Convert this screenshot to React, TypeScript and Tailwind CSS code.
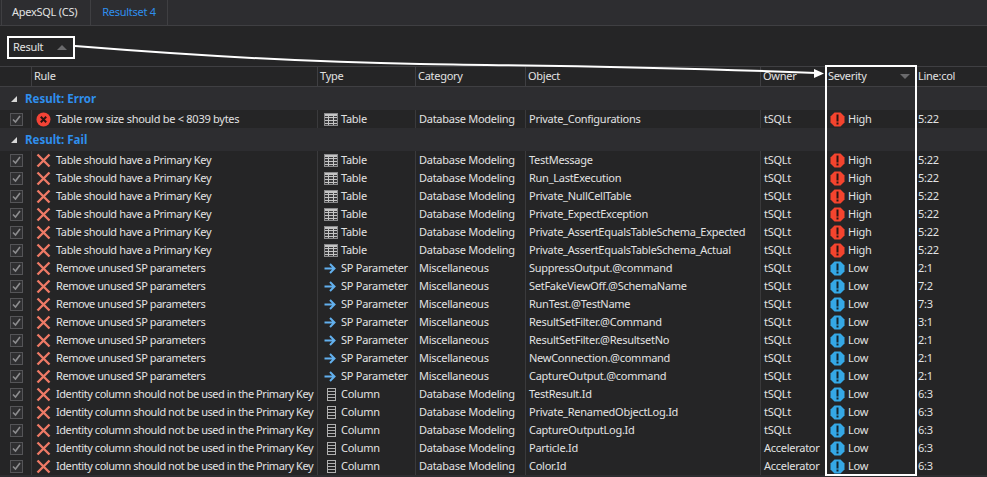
import React from 'react';

type Sev = 'High' | 'Low';
type Kind = 'Table' | 'SP Parameter' | 'Column';

interface Row {
  rule: string;
  kind: Kind;
  category: string;
  object: string;
  owner: string;
  sev: Sev;
  line: string;
}

const PK = 'Table should have a Primary Key';
const SP = 'Remove unused SP parameters';
const ID = 'Identity column should not be used in the Primary Key';
const DM = 'Database Modeling';
const MI = 'Miscellaneous';

// each rule text runs a bit differently wide against the original font
const ruleTracking: Record<string, string> = {
  [PK]: 'tracking-[-0.37px]',
  [SP]: 'tracking-[-0.45px]',
  [ID]: 'tracking-[-0.44px]',
};

const failRows: Row[] = [
  { rule: PK, kind: 'Table', category: DM, object: 'TestMessage', owner: 'tSQLt', sev: 'High', line: '5:22' },
  { rule: PK, kind: 'Table', category: DM, object: 'Run_LastExecution', owner: 'tSQLt', sev: 'High', line: '5:22' },
  { rule: PK, kind: 'Table', category: DM, object: 'Private_NullCellTable', owner: 'tSQLt', sev: 'High', line: '5:22' },
  { rule: PK, kind: 'Table', category: DM, object: 'Private_ExpectException', owner: 'tSQLt', sev: 'High', line: '5:22' },
  { rule: PK, kind: 'Table', category: DM, object: 'Private_AssertEqualsTableSchema_Expected', owner: 'tSQLt', sev: 'High', line: '5:22' },
  { rule: PK, kind: 'Table', category: DM, object: 'Private_AssertEqualsTableSchema_Actual', owner: 'tSQLt', sev: 'High', line: '5:22' },
  { rule: SP, kind: 'SP Parameter', category: MI, object: 'SuppressOutput.@command', owner: 'tSQLt', sev: 'Low', line: '2:1' },
  { rule: SP, kind: 'SP Parameter', category: MI, object: 'SetFakeViewOff.@SchemaName', owner: 'tSQLt', sev: 'Low', line: '7:2' },
  { rule: SP, kind: 'SP Parameter', category: MI, object: 'RunTest.@TestName', owner: 'tSQLt', sev: 'Low', line: '7:3' },
  { rule: SP, kind: 'SP Parameter', category: MI, object: 'ResultSetFilter.@Command', owner: 'tSQLt', sev: 'Low', line: '3:1' },
  { rule: SP, kind: 'SP Parameter', category: MI, object: 'ResultSetFilter.@ResultsetNo', owner: 'tSQLt', sev: 'Low', line: '2:1' },
  { rule: SP, kind: 'SP Parameter', category: MI, object: 'NewConnection.@command', owner: 'tSQLt', sev: 'Low', line: '2:1' },
  { rule: SP, kind: 'SP Parameter', category: MI, object: 'CaptureOutput.@command', owner: 'tSQLt', sev: 'Low', line: '2:1' },
  { rule: ID, kind: 'Column', category: DM, object: 'TestResult.Id', owner: 'tSQLt', sev: 'Low', line: '6:3' },
  { rule: ID, kind: 'Column', category: DM, object: 'Private_RenamedObjectLog.Id', owner: 'tSQLt', sev: 'Low', line: '6:3' },
  { rule: ID, kind: 'Column', category: DM, object: 'CaptureOutputLog.Id', owner: 'tSQLt', sev: 'Low', line: '6:3' },
  { rule: ID, kind: 'Column', category: DM, object: 'Particle.Id', owner: 'Accelerator', sev: 'Low', line: '6:3' },
  { rule: ID, kind: 'Column', category: DM, object: 'Color.Id', owner: 'Accelerator', sev: 'Low', line: '6:3' },
];

const errorRow: Row = {
  rule: 'Table row size should be < 8039 bytes',
  kind: 'Table',
  category: DM,
  object: 'Private_Configurations',
  owner: 'tSQLt',
  sev: 'High',
  line: '5:22',
};

const gridCols = 'grid grid-cols-[31px_286px_98px_110px_235px_65px_90px_1fr]';

const CheckBox = () => (
  <div className="w-[13px] h-[13px] border border-[#555558] bg-[#2f2f31] flex items-center justify-center">
    <svg width="11" height="11" viewBox="0 0 11 11">
      <path d="M2 5.5 L4.5 8 L9 2" fill="none" stroke="#8d8d8f" strokeWidth="1.6" />
    </svg>
  </div>
);

const RedX = () => (
  <svg width="15" height="15" viewBox="0 0 15 15" className="shrink-0">
    <path d="M1.5 1.5 L13.5 13.5 M13.5 1.5 L1.5 13.5" stroke="#ee7a66" strokeWidth="2.4" fill="none" />
  </svg>
);

const ErrorCircle = () => (
  <svg width="15" height="15" viewBox="0 0 15 15" className="shrink-0">
    <circle cx="7.5" cy="7.5" r="7" fill="#f44336" />
    <path d="M4.8 4.8 L10.2 10.2 M10.2 4.8 L4.8 10.2" stroke="#2a1210" strokeWidth="2" fill="none" />
  </svg>
);

const TableIcon = () => (
  <svg width="14" height="13" viewBox="0 0 14 13" className="shrink-0">
    <rect x="0.5" y="0.5" width="13" height="12" fill="#3a3a3c" stroke="#8a8a8c" />
    <path d="M1 4.5 H13 M1 7.5 H13 M1 10.5 H13 M4.5 3 V12 M9.5 3 V12" stroke="#c4c4c4" fill="none" />
    <rect x="1" y="1" width="12" height="2" fill="#c4c4c4" />
  </svg>
);

const ArrowIcon = () => (
  <svg width="12" height="11" viewBox="0 0 12 11" className="shrink-0">
    <path d="M0.5 5.5 H10 M6 1 L10.5 5.5 L6 10" stroke="#62b0ee" strokeWidth="2" fill="none" />
  </svg>
);

const ColumnIcon = () => (
  <svg width="9" height="13" viewBox="0 0 9 13" className="shrink-0">
    <rect x="0.5" y="0.5" width="8" height="12" fill="none" stroke="#b0b0b0" />
    <path d="M1 3.5 H8 M1 6.5 H8 M1 9.5 H8" stroke="#b0b0b0" fill="none" />
  </svg>
);

const SevIcon = ({ sev }: { sev: Sev }) => (
  <svg width="15" height="15" viewBox="0 0 15 15" className="shrink-0">
    <path
      d="M4.5 0.5 H10.5 L14.5 4.5 V10.5 L10.5 14.5 H4.5 L0.5 10.5 V4.5 Z"
      fill={sev === 'High' ? '#f4442e' : '#35a8e6'}
    />
    <rect x="6.5" y="2.5" width="2" height="7" fill={sev === 'High' ? '#2a1412' : '#12242e'} />
    <rect x="6.5" y="10.5" width="2" height="2" fill={sev === 'High' ? '#2a1412' : '#12242e'} />
  </svg>
);

const TypeCell = ({ kind }: { kind: Kind }) => (
  <div className="flex items-center border-l border-[#3a3a3c] h-full">
    <div className={kind === 'Column' ? 'w-[23px] pl-[9px]' : 'w-[23px] pl-[6px]'}>
      {kind === 'Table' && <TableIcon />}
      {kind === 'SP Parameter' && <ArrowIcon />}
      {kind === 'Column' && <ColumnIcon />}
    </div>
    <span>{kind}</span>
  </div>
);

const DataRow = ({ row, error }: { row: Row; error?: boolean }) => (
  <div className={gridCols + ' h-[18px] items-center bg-[#252526] text-[#e2e2e2] whitespace-nowrap'}>
    <div className="flex items-center justify-center pl-px h-full">
      <CheckBox />
    </div>
    <div className="flex items-center gap-[5px] pl-[4px] border-l border-[#3a3a3c] h-full">
      {error ? <ErrorCircle /> : <RedX />}
      <span className={ruleTracking[row.rule]}>{row.rule}</span>
    </div>
    <TypeCell kind={row.kind} />
    <div className="pl-[3px] border-l border-[#3a3a3c] h-full flex items-center">{row.category}</div>
    <div className="pl-[3px] border-l border-[#3a3a3c] h-full flex items-center">{row.object}</div>
    <div className="pl-[3px] border-l border-[#3a3a3c] h-full flex items-center">{row.owner}</div>
    <div className="flex items-center gap-[3px] pl-[5px] h-full">
      <SevIcon sev={row.sev} />
      <span>{row.sev}</span>
    </div>
    <div className="pl-[3px] h-full flex items-center">{row.line}</div>
  </div>
);

const GroupRow = ({ label }: { label: string }) => (
  <div className="h-[23px] pt-px flex items-center bg-[#2d2d30] pl-[11px]">
    <div className="w-0 h-0 border-l-[6px] border-l-transparent border-b-[6px] border-b-[#d8d8d8]" />
    <span className="ml-[8px] font-bold text-[11.5px] tracking-normal text-[#2f8fee]">{label}</span>
  </div>
);

const HeaderCell = ({ label }: { label: string }) => (
  <div className="pl-[2px] border-l border-[#3f3f42] h-full flex items-center">{label}</div>
);

export default function App() {
  return (
    <div className="relative w-[987px] h-[477px] overflow-hidden bg-[#2d2d30] text-[11px] tracking-[-0.27px] font-['Noto_Sans',sans-serif] text-[#e2e2e2]">
      <div className="flex h-[26px] pl-px border-b border-[#3f3f42] bg-[#2d2d30]">
        <div className="w-[90px] flex items-center pl-[10px] border-x border-[#3f3f42]">ApexSQL (CS)</div>
        <div className="w-[77px] flex items-center justify-center border-r border-[#3f3f42] text-[#2f8fee]">Resultset 4</div>
      </div>

      <div className="h-[40px] flex items-center pl-[13px] pt-[2px] bg-[#252526]">
        <span>Result</span>
        <div className="ml-[14px] w-0 h-0 border-x-[5px] border-x-transparent border-b-[5px] border-b-[#6a6a6c]" />
      </div>

      <div className={gridCols + ' h-[21px] items-center bg-[#252526] border-y border-[#3f3f42]'}>
        <div />
        <HeaderCell label="Rule" />
        <HeaderCell label="Type" />
        <HeaderCell label="Category" />
        <HeaderCell label="Object" />
        <HeaderCell label="Owner" />
        <div className="pl-[3px] h-full flex items-center justify-between pr-[5px]">
          <span>Severity</span>
          <div className="w-0 h-0 border-x-[5px] border-x-transparent border-t-[5px] border-t-[#6a6a6c]" />
        </div>
        <HeaderCell label="Line:col" />
      </div>

      <GroupRow label="Result: Error" />
      <DataRow row={errorRow} error />
      <GroupRow label="Result: Fail" />
      {failRows.map((row, i) => (
        <DataRow key={i} row={row} />
      ))}

      {/* annotation drawn over the grid */}
      <div className="absolute left-[7px] top-[36px] w-[68px] h-[23px] border-2 border-white" />
      <div className="absolute left-[825px] top-[65px] w-[92px] h-[411px] border-2 border-white" />
      <svg className="absolute left-0 top-0 pointer-events-none" width="987" height="477" viewBox="0 0 987 477">
        <path d="M75 46 C 200 56, 300 62, 420 64 S 640 66, 816 73" fill="none" stroke="white" strokeWidth="2" />
        <path d="M814 69 L824 73.5 L814 78 Z" fill="white" />
      </svg>
    </div>
  );
}
